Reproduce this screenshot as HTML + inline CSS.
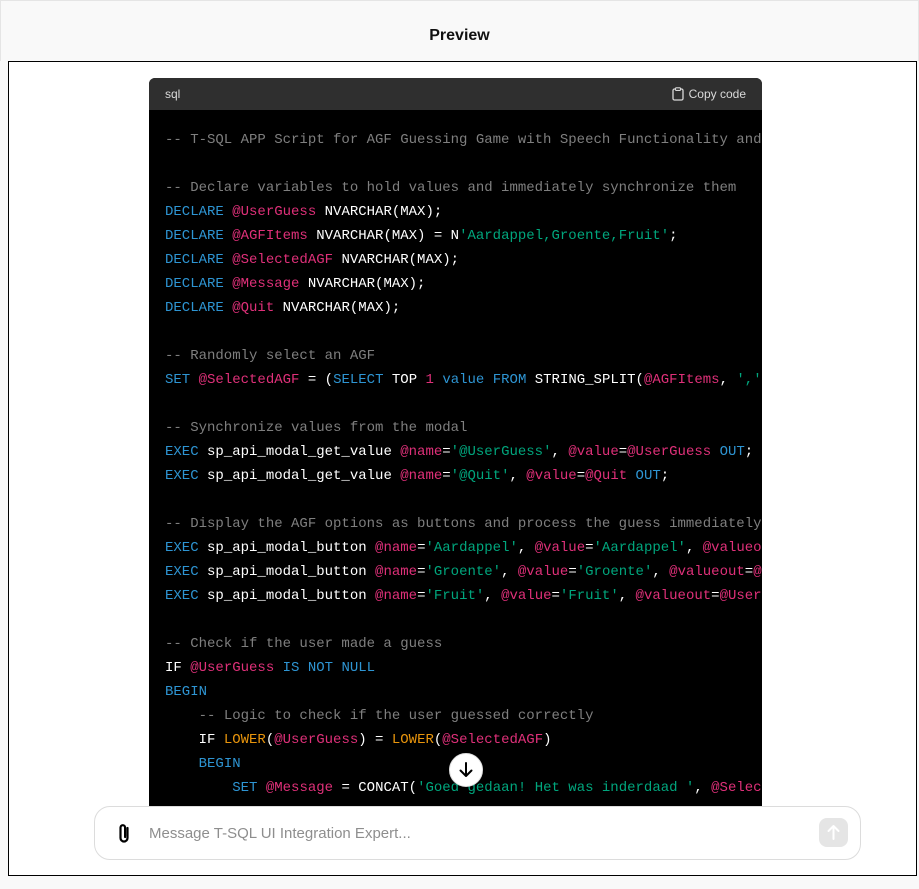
<!DOCTYPE html>
<html><head><meta charset="utf-8"><style>
body{margin:0;width:919px;height:889px;background:#f9f9f9;font-family:"Liberation Sans",sans-serif;position:relative;overflow:hidden}
.top{position:absolute;left:0;top:0;width:917px;height:60px;border:1px solid #e5e5e5;border-bottom:none;background:#f9f9f9}
.title{position:absolute;top:27px;left:0;width:919px;text-align:center;font-weight:bold;font-size:16px;color:#111}
.frame{position:absolute;left:8px;top:61px;width:907px;height:813px;border:1px solid #000;background:#fff;overflow:hidden}
.code{position:absolute;left:140px;top:16px;width:613px;height:740px;background:#000;border-radius:6px 6px 0 0;overflow:hidden}
.hdr{height:32px;background:#2f2f2f;color:#d9d9d9;font-size:12px;display:flex;align-items:center;justify-content:space-between;padding:0 16px}
pre{margin:0;padding:18px 0 0 16px;font-family:"Liberation Mono",monospace;font-size:14px;line-height:24px;color:#fff;white-space:pre}
.c{color:#7f7f7f}.k{color:#2e95d3}.v{color:#df3079}.s{color:#00a67d}.f{color:#e9950c}
.input{position:absolute;left:85px;top:744px;width:765px;height:52px;border:1px solid #dcdcdc;border-radius:16px;background:#fff}
.ph{position:absolute;left:54px;top:18px;font-size:15px;color:#8e8e8e}
.send{position:absolute;right:12px;top:11px;width:29px;height:29px;border-radius:8px;background:#e5e5e5}
.down{position:absolute;left:440px;top:691px;width:32px;height:32px;border-radius:50%;background:#fff;border:1px solid #ddd}
</style></head><body>
<div class="top"></div>
<div class="title">Preview</div>
<div class="frame">
<div class="code">
<div class="hdr"><span>sql</span><span style="display:flex;align-items:center;gap:5px"><svg width="12" height="14" viewBox="0 0 12 14"><rect x="1" y="2" width="10" height="11" rx="1.5" fill="none" stroke="#d9d9d9" stroke-width="1.3"/><rect x="3.5" y="0.8" width="5" height="2.6" rx="0.8" fill="#2f2f2f" stroke="#d9d9d9" stroke-width="1.1"/></svg>Copy code</span></div>
<pre><span class="c">-- T-SQL APP Script for AGF Guessing Game with Speech Functionality and</span>

<span class="c">-- Declare variables to hold values and immediately synchronize them</span>
<span class="k">DECLARE</span> <span class="v">@UserGuess</span> NVARCHAR(MAX);
<span class="k">DECLARE</span> <span class="v">@AGFItems</span> NVARCHAR(MAX) = N<span class="s">'Aardappel,Groente,Fruit'</span>;
<span class="k">DECLARE</span> <span class="v">@SelectedAGF</span> NVARCHAR(MAX);
<span class="k">DECLARE</span> <span class="v">@Message</span> NVARCHAR(MAX);
<span class="k">DECLARE</span> <span class="v">@Quit</span> NVARCHAR(MAX);

<span class="c">-- Randomly select an AGF</span>
<span class="k">SET</span> <span class="v">@SelectedAGF</span> = (<span class="k">SELECT</span> TOP <span class="v">1</span> <span class="k">value</span> <span class="k">FROM</span> STRING_SPLIT(<span class="v">@AGFItems</span>, <span class="s">','</span>
 
<span class="c">-- Synchronize values from the modal</span>
<span class="k">EXEC</span> sp_api_modal_get_value <span class="v">@name</span>=<span class="s">'@UserGuess'</span>, <span class="v">@value</span>=<span class="v">@UserGuess</span> <span class="k">OUT</span>;
<span class="k">EXEC</span> sp_api_modal_get_value <span class="v">@name</span>=<span class="s">'@Quit'</span>, <span class="v">@value</span>=<span class="v">@Quit</span> <span class="k">OUT</span>;

<span class="c">-- Display the AGF options as buttons and process the guess immediately</span>
<span class="k">EXEC</span> sp_api_modal_button <span class="v">@name</span>=<span class="s">'Aardappel'</span>, <span class="v">@value</span>=<span class="s">'Aardappel'</span>, <span class="v">@valueout</span>
<span class="k">EXEC</span> sp_api_modal_button <span class="v">@name</span>=<span class="s">'Groente'</span>, <span class="v">@value</span>=<span class="s">'Groente'</span>, <span class="v">@valueout</span>=<span class="v">@</span>
<span class="k">EXEC</span> sp_api_modal_button <span class="v">@name</span>=<span class="s">'Fruit'</span>, <span class="v">@value</span>=<span class="s">'Fruit'</span>, <span class="v">@valueout</span>=<span class="v">@User</span>

<span class="c">-- Check if the user made a guess</span>
IF <span class="v">@UserGuess</span> <span class="k">IS NOT NULL</span>
<span class="k">BEGIN</span>
    <span class="c">-- Logic to check if the user guessed correctly</span>
    IF <span class="f">LOWER</span>(<span class="v">@UserGuess</span>) = <span class="f">LOWER</span>(<span class="v">@SelectedAGF</span>)
    <span class="k">BEGIN</span>
        <span class="k">SET</span> <span class="v">@Message</span> = CONCAT(<span class="s">'Goed gedaan! Het was inderdaad '</span>, <span class="v">@Selec</span></pre>
</div>
<div class="down"><svg width="32" height="32" viewBox="0 0 32 32"><path d="M16 9v13M10.5 16.5L16 22l5.5-5.5" fill="none" stroke="#000" stroke-width="2" stroke-linecap="round" stroke-linejoin="round"/></svg></div>
<div class="input">
<svg style="position:absolute;left:20px;top:15px" width="18" height="24" viewBox="0 0 18 24"><path d="M12.5 6v10a3.5 3.5 0 0 1-7 0V5.5a2.3 2.3 0 0 1 4.6 0V15" fill="none" stroke="#000" stroke-width="2.2" stroke-linecap="round"/></svg>
<span class="ph">Message T-SQL UI Integration Expert...</span>
<div class="send"><svg width="29" height="29" viewBox="0 0 29 29"><path d="M14.5 21V8M9.5 13l5-5 5 5" fill="none" stroke="#fff" stroke-width="2" stroke-linecap="round" stroke-linejoin="round"/></svg></div>
</div>
</div>
</body></html>
